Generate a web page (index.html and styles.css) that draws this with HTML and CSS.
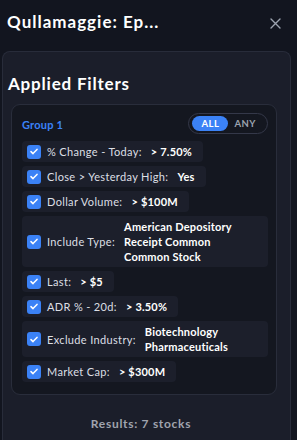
FILE: index.html
```html
<!DOCTYPE html>
<html>
<head>
<meta charset="UTF-8" />
<title>Applied Filters</title>
<link rel="stylesheet" href="styles.css">
</head>
<body>

<div id="header">
	<div class="title">Qullamaggie: Ep...</div>
	<div class="close">
		<svg width="11" height="11" viewBox="0 0 11 11"><path d="M1 1L10 10M10 1L1 10" stroke="#9ca3af" stroke-width="1.4" stroke-linecap="round"/></svg>
	</div>
</div><!-- header -->

<div id="panel">
	<h2 class="heading">Applied Filters</h2>

	<div class="card">
		<div class="group-head">
			<span class="group-name">Group 1</span>
			<div class="toggle">
				<span class="opt active">ALL</span>
				<span class="opt">ANY</span>
			</div>
		</div>

		<div class="filters">
			<div class="chip">
				<span class="box"><svg width="8" height="7" viewBox="0 0 8 7"><path d="M1 3.6L3 5.6L7 1.4" stroke="#fff" stroke-width="1.5" fill="none" stroke-linecap="round" stroke-linejoin="round"/></svg></span>
				<span class="label">% Change - Today:</span>
				<span class="value">&gt; 7.50%</span>
			</div>
			<div class="chip">
				<span class="box"><svg width="8" height="7" viewBox="0 0 8 7"><path d="M1 3.6L3 5.6L7 1.4" stroke="#fff" stroke-width="1.5" fill="none" stroke-linecap="round" stroke-linejoin="round"/></svg></span>
				<span class="label">Close &gt; Yesterday High:</span>
				<span class="value">Yes</span>
			</div>
			<div class="chip">
				<span class="box"><svg width="8" height="7" viewBox="0 0 8 7"><path d="M1 3.6L3 5.6L7 1.4" stroke="#fff" stroke-width="1.5" fill="none" stroke-linecap="round" stroke-linejoin="round"/></svg></span>
				<span class="label">Dollar Volume:</span>
				<span class="value">&gt; $100M</span>
			</div>
			<div class="chip wide">
				<span class="box"><svg width="8" height="7" viewBox="0 0 8 7"><path d="M1 3.6L3 5.6L7 1.4" stroke="#fff" stroke-width="1.5" fill="none" stroke-linecap="round" stroke-linejoin="round"/></svg></span>
				<span class="label">Include Type:</span>
				<span class="value">
					<span class="line">American Depository Receipt Common</span>
					<span class="line">Common Stock</span>
				</span>
			</div>
			<div class="chip">
				<span class="box"><svg width="8" height="7" viewBox="0 0 8 7"><path d="M1 3.6L3 5.6L7 1.4" stroke="#fff" stroke-width="1.5" fill="none" stroke-linecap="round" stroke-linejoin="round"/></svg></span>
				<span class="label">Last:</span>
				<span class="value">&gt; $5</span>
			</div>
			<div class="chip">
				<span class="box"><svg width="8" height="7" viewBox="0 0 8 7"><path d="M1 3.6L3 5.6L7 1.4" stroke="#fff" stroke-width="1.5" fill="none" stroke-linecap="round" stroke-linejoin="round"/></svg></span>
				<span class="label">ADR % - 20d:</span>
				<span class="value">&gt; 3.50%</span>
			</div>
			<div class="chip wide">
				<span class="box"><svg width="8" height="7" viewBox="0 0 8 7"><path d="M1 3.6L3 5.6L7 1.4" stroke="#fff" stroke-width="1.5" fill="none" stroke-linecap="round" stroke-linejoin="round"/></svg></span>
				<span class="label">Exclude Industry:</span>
				<span class="value">
					<span class="line">Biotechnology</span>
					<span class="line">Pharmaceuticals</span>
				</span>
			</div>
			<div class="chip">
				<span class="box"><svg width="8" height="7" viewBox="0 0 8 7"><path d="M1 3.6L3 5.6L7 1.4" stroke="#fff" stroke-width="1.5" fill="none" stroke-linecap="round" stroke-linejoin="round"/></svg></span>
				<span class="label">Market Cap:</span>
				<span class="value">&gt; $300M</span>
			</div>
		</div><!-- filters -->
	</div><!-- card -->

	<div class="results">Results: 7 stocks</div>
</div><!-- panel -->

</body>
</html>
```

FILE: styles.css
```css
html, body {
	height: 440px;
	overflow: hidden;
}

body {
	margin: 0;
	background: #12151f;
	font-family: Lato, "Open Sans", sans-serif;
	color: #e5e7eb;
}

#header {
	height: 51px;
	display: flex;
	align-items: flex-start;
	justify-content: space-between;
	padding: 11px 16px 0 7px;
	box-sizing: border-box;
}

.title {
	font-size: 17px;
	font-weight: 700;
	color: #fff;
	letter-spacing: 1px;
}

.close {
	padding-top: 2px;
}

#panel {
	margin-left: 2px;
	width: 289px;
	height: 389px;
	box-sizing: border-box;
	background: #1b1e2a;
	border: 1px solid #282c3a;
	border-bottom: none;
	border-radius: 8px 8px 0 0;
	padding: 0 13px 0 8px;
}

.heading {
	margin: 21px 0 0 -3px;
	font-size: 17px;
	font-weight: 700;
	color: #fff;
	line-height: 22px;
	letter-spacing: 0.8px;
}

.card {
	margin-top: 9px;
	background: #141720;
	border: 1px solid #292d3b;
	border-radius: 9px;
	padding: 8px 8px 12px 10px;
}

.group-head {
	display: flex;
	align-items: center;
	justify-content: space-between;
	height: 21px;
}

.group-name {
	font-size: 11px;
	font-weight: 700;
	color: #3b82f6;
	padding-top: 1px;
	letter-spacing: 0.2px;
}

.toggle {
	display: flex;
	align-items: center;
	gap: 6px;
	height: 19px;
	padding: 0 11px 0 3px;
	border: 1px solid #343849;
	border-radius: 11px;
}

.opt {
	font-size: 9.5px;
	font-weight: 700;
	color: #9ca3af;
	line-height: 15px;
	letter-spacing: 0.5px;
}

.opt.active {
	background: #3b82f6;
	color: #fff;
	padding: 0 9px;
	border-radius: 8px;
}

.filters {
	margin-top: 7px;
	display: flex;
	flex-direction: column;
	align-items: flex-start;
	gap: 4px;
}

.chip {
	display: flex;
	align-items: center;
	background: #1c1f2b;
	border-radius: 4px;
	padding: 3px 11px 3px 5px;
	font-size: 11px;
	line-height: 15px;
	max-width: 100%;
	box-sizing: border-box;
}

.chip.wide {
	width: 100%;
}

.box {
	flex: none;
	width: 14px;
	height: 14px;
	border-radius: 3px;
	background: #3b82f6;
	display: flex;
	align-items: center;
	justify-content: center;
	margin-right: 6px;
}

.label {
	flex: none;
	color: #dcdfe5;
	margin-right: 9px;
	letter-spacing: 0.35px;
}

.value {
	font-weight: 700;
	color: #fff;
	letter-spacing: 0.2px;
}

.line {
	display: block;
}

.results {
	margin-top: 21px;
	text-align: center;
	font-size: 12px;
	font-weight: 700;
	color: #a0a4ae;
	padding-right: 6px;
	letter-spacing: 0.7px;
}
```
